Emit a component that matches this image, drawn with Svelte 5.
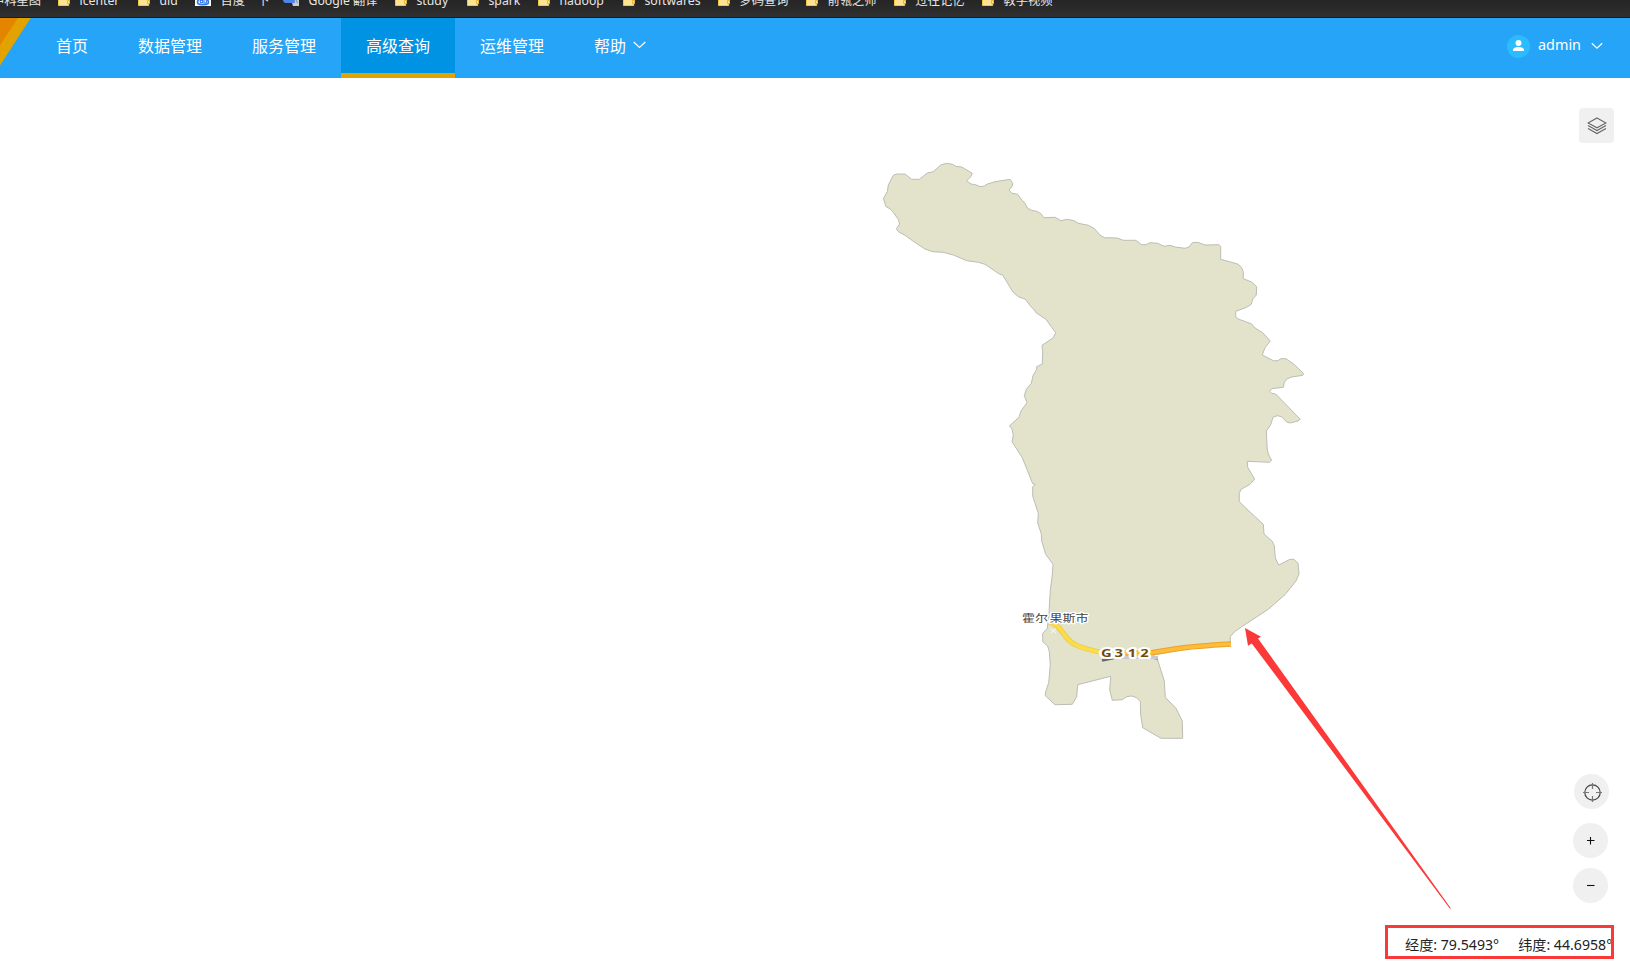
<script>
  const bookmarks = [
    { icon: '', label: '中科星图' },
    { icon: 'folder', label: 'icenter' },
    { icon: 'folder', label: 'dld' },
    { icon: 'baidu', label: '百度一下' },
    { icon: 'translate', label: 'Google 翻译' },
    { icon: 'folder', label: 'study' },
    { icon: 'folder', label: 'spark' },
    { icon: 'folder', label: 'hadoop' },
    { icon: 'folder', label: 'softwares' },
    { icon: 'folder', label: '梦码查询' },
    { icon: 'folder', label: '前瓴之师' },
    { icon: 'folder', label: '过往记忆' },
    { icon: 'folder', label: '教学视频' },
  ];
  const menu = ['首页', '数据管理', '服务管理', '高级查询', '运维管理', '帮助'];
  let active = $state('高级查询');

  const region =
    'M883.5 198.3 887.3 191.7 888.3 185 893.3 175.3 896.7 174 905 174 911.7 179.3 919.3 179.3 927.3 173 933.3 171.7 940.7 165 946.7 163.3 952.7 164.3 955.7 166.3 961.7 167 972.3 173.3 971 176.5 966.7 180.7 971 184 975.7 184.7 980 186.7 984.3 186 987.3 184 995 181.7 1010 179.3 1012.7 183.3 1012 186.7 1009 190 1012 193.3 1017.7 194.3 1021.7 200 1024.3 202.3 1027.7 208.3 1031.7 210.3 1036.7 211.3 1041 213.7 1043.7 217.7 1055 217.3 1061 220.7 1067.3 219.3 1074 220.7 1078.3 223.3 1088.3 225.3 1094 228.3 1100 235 1104.3 237.7 ' +
    '1117.3 238 1123.3 240.3 1135.7 240.3 1141.7 244.7 1146 244.7 1150 242.7 1157.7 243.3 1164 246.3 1170 245.3 1175 247 1185 248.3 1189 247 1192.3 242.7 1197.7 242.3 1205 245 1219 244.7 1220.7 246.7 1220.7 259.3 1231.7 262.3 1238.3 264.3 1241.7 267.7 1243.3 271.7 1243.3 278.7 1251.7 282 1256.7 286.7 1256.3 295 1252.7 299 1251.3 304.3 1246.7 307.3 1235.7 311.3 1235.7 316.7 1238.3 319 1251.7 324 1255 328 1262.7 332.7 1266.7 337 1270.3 341 1265 347.7 1262.3 355 1273.3 360.7 1278 360.7 1280.7 358.7 1286 358.7 1294 364.3 1303.7 373.7 1302.7 375.3 1291.7 377 1286.7 379 1284.3 382.7 1283.3 387.3 1271.7 388.7 1269.7 391.3 1271.7 393.3 1275.7 394 1300.3 419.3 1298 421 ' +
    '1290 423 1286.7 422 1281.7 416.7 1277.3 415.7 1273 417.3 1270.7 424.7 1266.3 431 1267.3 450 1268.3 454 1271.7 460.3 1269.3 462.3 1247.3 461.3 1247.7 467.3 1254.7 479 1250 484.3 1241 489.3 1239.3 493.3 1239.3 501.7 1245 507.3 1263.3 524.3 1264 534 1272.3 541.3 1274.3 545.7 1275.3 558 1278.7 565 1290 559.3 1294 559.3 1298 563.3 1299 574 1296 581 1285 594.7 1268.3 609.3 1241.7 626.7 1234.3 632 1230.3 636.7 1230.3 645 ' +
    '1190 648.3 1153.3 655 1157.7 660 1164.3 681 1165.3 697.3 1176 708.3 1182.3 721 1182.7 738.3 1161 738.3 1142.7 727.7 1140.7 715 1140.3 701.7 1136.7 697.7 1131.7 696 1126.7 696.7 1122.3 699.7 1112.3 700.3 1109.7 690 1110.7 676.3 1077.7 684.7 1076.7 696.7 1072.3 704.3 1055 704.7 1045.3 695.7 1045.7 691.7 1048.7 682.7 1050.3 665 1049.3 651.7 1047.7 646 1042.7 641.7 1042.7 633.3 1047.3 628.3 1049 613.3 ' +
    '1050.3 590 1052.3 575 1053 564.3 1045.7 554.3 1041.7 541 1041.3 534 1037.7 522.7 1038.3 513.3 1032.7 496 1032.7 486.7 1035.3 484.3 1032.7 483.7 1022.3 457.7 1012 441.7 1013.3 435 1011.7 428.3 1009.3 426 1019 417.3 1021 411 1027 402.7 1024.3 395.7 1026.3 389.3 1031.3 383.3 1033 375.7 1036.7 369.3 1036.7 366.7 1042.3 364 1042.7 351.7 1042 345.3 1053.3 337.7 ' +
    '1055.7 332.7 1051.7 327.3 1046 319.3 1036 312.7 1034.3 310 1031 306.7 1025.3 299.3 1018.3 296.7 1012.7 291.7 1007.3 282.7 1002.7 275 999.3 274 985 264.3 978.3 262.3 966.7 260.7 953.3 255 943.3 252.3 932.3 251.7 925 249 913.3 241.3 905 235.3 898.3 231.7 896.3 228.7 899.7 224 898.3 219.3 892.7 211.7 890.7 209.3 885.7 206.3Z';
</script>

<div class="page">
  <div class="bookmarks">
    {#each bookmarks as b}
      <div class="bookmark">
        {#if b.icon === 'folder'}
          <svg width="12" height="16" viewBox="0 0 12 16"><path d="M.5 2.5h5l1.500 2h4.500v6.500l-.8 1v3.500H.5z" fill="#ffe391" stroke="#efc64f" /><path d="M9.500 10.500h2v3h-2z" fill="#ffe391" stroke="#e5b73b" /></svg>
        {:else if b.icon === 'baidu'}
          <svg width="16" height="16" viewBox="0 0 16 16"><path fill="#fff" d="M0 0h16v16H0z" /><g fill="none" stroke="#3577e6" stroke-width="1.700"><path d="M5 8.500C3 10 1.800 11.500 3 13.700c1.500 1.300 8.500 1.300 10 0 1.200-2.200 0-3.700-2-5.200L8 7z" /><circle cx="6.500" cy="11.500" r="1.300" stroke-width="1.100" /><path d="M9 10v3h2.300v-3" stroke-width="1.100" /></g><path d="M1 5h3v3H1zM12 5h3v3h-3z" fill="#3577e6" /></svg>
        {:else if b.icon === 'translate'}
          <svg width="16" height="17" viewBox="0 0 16 17"><path fill="#c9cdd3" d="M6 4h10v13H10z" /><path fill="#4c83ec" d="M0 0h9l3 14H2l-2-2z" /><path d="m10.500 13 2-3 2 4" fill="none" stroke="#758da8" /></svg>
        {/if}
        <span>{b.label}</span>
      </div>
    {/each}
  </div>

  <header>
    <svg class="corner" width="31" height="60" viewBox="0 0 31 60"><path d="M0 0h30.700L0 47.500z" fill="#e2a300" /><path d="M0 0h18L0 27.500z" fill="#e48500" /></svg>
    <nav>
      {#each menu as item}
        <button class:active={item === active} onclick={() => (active = item)}>
          {item}
          {#if item === '帮助'}
            <svg width="13" height="8" viewBox="0 0 13 8"><path d="m.7 1 5.800 5.500L12.300 1" fill="none" stroke="currentColor" stroke-width="1.200" /></svg>
          {/if}
        </button>
      {/each}
    </nav>
    <div class="user">
      <svg width="23" height="23" viewBox="0 0 23 23"><circle cx="11.500" cy="11.500" r="11.500" fill="#2bbcff" /><circle cx="11.500" cy="8" r="3" fill="#fff" /><path d="M6 16v-1.200c0-1.500 2.500-2.800 5.500-2.800s5.500 1.300 5.500 2.800V16z" fill="#fff" /></svg>
      <span>admin</span>
      <svg width="12" height="8" viewBox="0 0 12 8"><path d="m.8 1.200 5.200 5 5.200-5" fill="none" stroke="currentColor" stroke-width="1.200" /></svg>
    </div>
  </header>

  <main>
    <svg class="map" width="1630" height="887" viewBox="0 78 1630 887">
      <path d={region} fill="#e2e3ca" stroke="#bdbdb6" stroke-width="1" stroke-linejoin="round" />
      <path d="m1102 660.500 12-2.500M1150 657l8 1.500" stroke="#666a70" stroke-width="2.500" />
      <path d="M1108 657.500h50" stroke="#c9cacc" stroke-width="3" />
      <path d="M1049 622c13 2 15 19 27 23 8 4 18 6 28 8" fill="none" stroke="#e5cb4a" stroke-width="5.200" />
      <path d="M1049 622c13 2 15 19 27 23 8 4 18 6 28 8" fill="none" stroke="#fddc49" stroke-width="3.800" />
      <path d="M1100 653h50l25-4q20-3 56-5" fill="none" stroke="#e9a22b" stroke-width="5.400" />
      <path d="M1100 653h50l25-4q20-3 56-5" fill="none" stroke="#ffbc37" stroke-width="3.600" />
      <path d="m1051 629 5 4m0-4-5 4" stroke="#f2f2ea" stroke-width="1.500" />
      <g class="halo" font-family="'Noto Sans CJK SC', sans-serif" font-size="10" fill="#454545" stroke-width="2.500">
        <text x="1022" y="621.500" textLength="26" lengthAdjust="spacingAndGlyphs">霍尔</text>
        <text x="1049.500" y="621.500" textLength="39" lengthAdjust="spacingAndGlyphs">果斯市</text>
      </g>
      <g class="halo road" transform="translate(1101 656.500) scale(1.400 1)" font-family="'Open Sans', sans-serif" font-size="10.500" font-weight="700" fill="#704a0c" stroke-width="4">
        <text x="0 9.700 19.100 28" y="0">G312</text>
      </g>
      <path d="m1245 628 16 8.700-3 1.800L1451 908.500h-1.200L1251.800 643.500l-3.800 2.200z" fill="#fc3939" />
    </svg>

    <div class="tools">
      <button class="layers" aria-label="图层">
        <svg width="20" height="18" viewBox="0 0 20 18" fill="none" stroke="#666" stroke-width="1.100"><path d="m10 1 9 5-9 4.800L1 6z" /><path d="m1 8.500 9 5 9-5M1 11.500l9 5 9-5" /></svg>
      </button>
      <div class="lower">
        <button class="locate" aria-label="定位">
          <svg width="19" height="19" viewBox="0 0 19 19" fill="none" stroke="#444" stroke-width="1.200"><circle cx="9.500" cy="9.500" r="7.700" /><path d="M9.500 0v6M9.500 13v6M0 9.500h6M13 9.500h6" stroke="#777" /></svg>
        </button>
        <button class="zoom-in" aria-label="放大"><svg width="9" height="9" viewBox="0 0 9 9"><path d="M1 4.500h7.500M4.500 1v7.500" stroke="#111" stroke-width="1.100" /></svg></button>
        <button class="zoom-out" aria-label="缩小"><svg width="9" height="9" viewBox="0 0 9 9"><path d="M1 4.500h7.500" stroke="#111" stroke-width="1.100" /></svg></button>
        <div class="coords">
          <span>经度: 79.5493°</span>
          <span>纬度: 44.6958°</span>
        </div>
      </div>
    </div>
  </main>
</div>

<style>
  :global(body) { margin: 0; overflow: hidden; background: #fff; }
  .page {
    width: 1630px;
    height: 965px;
    display: flex;
    flex-direction: column;
    overflow: hidden;
    font-family: 'Noto Sans', 'Noto Sans CJK SC', sans-serif;
  }
  button { border: 0; padding: 0; background: none; font: inherit; color: inherit; cursor: pointer; }
  .bookmarks {
    flex: none;
    height: 17px;
    display: grid;
    grid-template-columns: 66px 80px 57px 88px 112px 72px 71px 85px 95px 88px 88px 88px 88px;
    align-items: end;
    margin-left: -8px;
    background: linear-gradient(#252525, #303030);
    border-bottom: 1px solid #1b1b1b;
    color: #e6e6e6;
    font-size: 12.250px;
    overflow: hidden;
  }
  .bookmark { display: flex; align-items: flex-end; gap: 9.500px; height: 17px; white-space: nowrap; }
  .bookmark svg { flex: none; margin-bottom: 11px; }
  .bookmark span { line-height: 16px; margin-bottom: 8px; }
  header {
    flex: none;
    height: 60px;
    display: flex;
    background: #25a4f8;
    color: #fff;
  }
  .corner { flex: none; }
  nav { display: flex; }
  nav button {
    display: flex;
    align-items: center;
    gap: 7px;
    padding: 0 25px 6px 25px;
    font-size: 16px;
    height: 60px;
    box-sizing: border-box;
  }
  nav button.active { background: #0092e3; border-bottom: 5px solid #e2a300; padding-bottom: 1px; }
  .user { margin-left: auto; display: flex; align-items: center; padding: 0 27px 4px 0; font-size: 14.400px; }
  .user span { margin: 0 10px 2px 8px; line-height: 20px; }
  main { flex: 1; display: grid; position: relative; }
  .map { grid-area: 1 / 1; display: block; }
  .halo text { paint-order: stroke; stroke: #fff; stroke-linejoin: round; }
  .tools {
    grid-area: 1 / 1;
    display: flex;
    flex-direction: column;
    align-items: flex-end;
    justify-content: space-between;
    padding: 30px 16px 6px 0;
    z-index: 1;
  }
  .tools button { width: 35px; height: 35px; background: #f0f0f0; display: grid; place-items: center; }
  .tools .layers { border-radius: 4px; }
  .lower { display: flex; flex-direction: column; align-items: flex-end; }
  .lower button { border-radius: 50%; margin-right: 6px; }
  .lower .locate { margin: 0 5px 14px 0; }
  .lower .locate svg { margin: 1px 0 0 1px; }
  .lower .zoom-in { margin-bottom: 10px; }
  .lower .zoom-out { margin-bottom: 22px; }
  .coords {
    box-sizing: border-box;
    width: 229px;
    height: 34px;
    border: 3px solid #fc3939;
    padding: 4px 0 0 17px;
    display: flex;
    align-items: center;
    gap: 19px;
    white-space: nowrap;
    overflow: hidden;
    font-size: 14.150px;
    color: #222;
  }
</style>
